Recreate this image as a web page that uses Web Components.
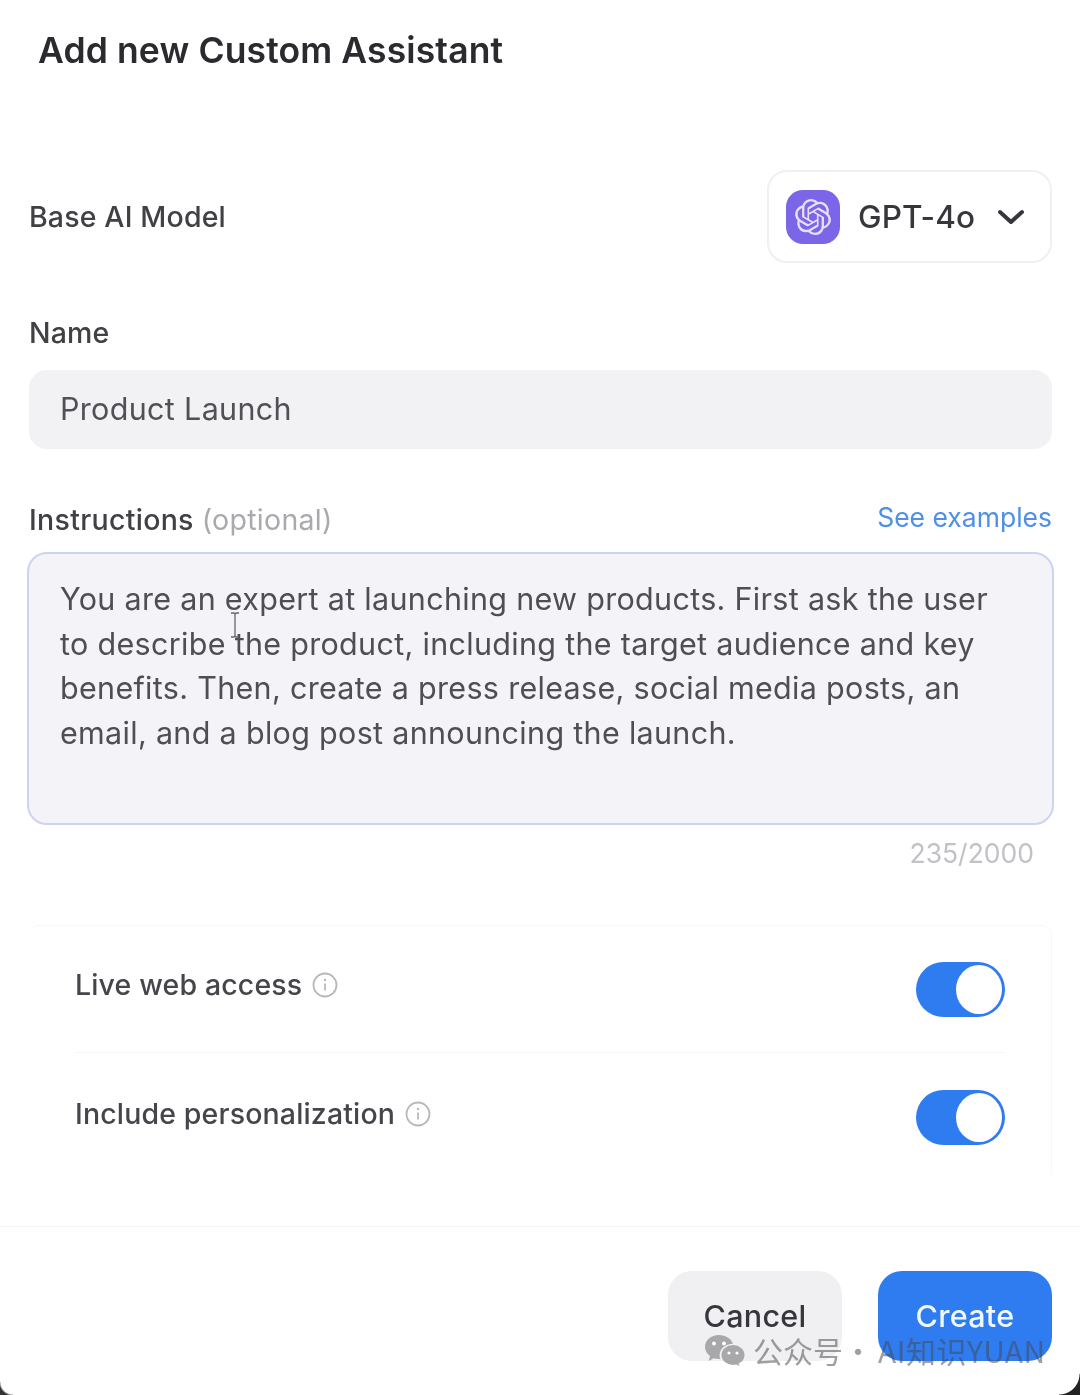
<!DOCTYPE html>
<html><head><meta charset="utf-8"><style>
html,body{margin:0;padding:0;background:#fff}
body{width:1080px;height:1395px;overflow:hidden;font-family:Inter,"Noto Sans CJK SC",sans-serif;color:#3c3c42}
</style></head><body>
<assistant-dialog></assistant-dialog>
<template id="t-dialog"><style>
:host{display:block;position:relative;width:1080px;height:1395px;background:#fff;box-sizing:border-box;overflow:hidden;filter:blur(.6px)}
h1{margin:0;padding:30px 0 0 38px;font:600 35.5px/42px Inter,sans-serif;color:#2a2a2f;height:70px;letter-spacing:.12px}
.body{padding:70px 28px 0 29px;display:flex;flex-direction:column}
.row{display:flex;align-items:center;justify-content:space-between}
.lbl{font:500 28.5px/34px Inter,sans-serif;color:#404045;letter-spacing:.15px}
.name{margin-top:53px}
.inp{margin-top:20px;height:79px;border-radius:18px;background:#f2f2f5;display:flex;align-items:center;padding-left:31px;font:400 30.5px/40px Inter,sans-serif;color:#505056;letter-spacing:.33px}
.inp span{transform:translateY(-1px)}
.ihead{margin-top:54px;align-items:flex-end}
.ihead .lbl{letter-spacing:.3px}
.opt{color:#aaaaae;font-weight:400}
.see{font:400 26.5px/34px Inter,sans-serif;color:#4f8fe6;transform:translateY(-3px);letter-spacing:0}
.ta{position:relative;margin:15px -2px 0 -2px;height:273px;box-sizing:border-box;border:2px solid #cdd3f2;border-radius:20px;background:#f3f3f8;padding:23px 30px 0 31px;font:400 30.5px/44.6px Inter,sans-serif;color:#4e4e54;letter-spacing:.31px}
.ta span{display:block;white-space:nowrap}
.count{font:400 26.5px/34px Inter,sans-serif;color:#c2c2c6;text-align:right;padding:11px 18px 0 0}
.cursor{position:absolute;left:200px;top:58px;width:12px;height:26px}
.card{margin-top:55px;height:256px;border:1.5px solid #f7f7f8;border-left:0;border-bottom:0;border-radius:10px;box-sizing:border-box;padding:0 46px 0 46px;display:flex;flex-direction:column}
.sep{height:1px;background:#f6f6f7}
.foot{position:absolute;left:0;right:0;top:1226px;height:1px;background:#f4f4f5}
.btns{position:absolute;left:668px;top:1271px;display:flex;gap:36px}
.wm{position:absolute;left:704px;top:1331px;display:flex;align-items:center;font:400 30px/38px "Noto Sans CJK SC",sans-serif;color:rgba(70,70,75,.52)}
.wm svg{margin-right:8px}
.wm i{font-style:normal;margin:0 5px 0 0}
.wm b{font-weight:400;letter-spacing:.5px}
.corner{position:absolute;right:-1px;bottom:-1px;width:22px;height:22px;background:radial-gradient(circle at 0 0,transparent 20px,#222 21px)}
.cornerl{position:absolute;left:-1px;bottom:-1px;width:14px;height:14px;background:radial-gradient(circle at 100% 0,transparent 12px,#333 14px)}
</style>
<h1>Add new Custom Assistant</h1>
<div class="body">
 <div class="row"><span class="lbl">Base AI Model</span><model-select>GPT-4o</model-select></div>
 <div class="lbl name">Name</div>
 <div class="inp"><span>Product Launch</span></div>
 <div class="row ihead"><span class="lbl">Instructions <span class="opt">(optional)</span></span><span class="see">See examples</span></div>
 <div class="ta"><span>You are an expert at launching new products. First ask the user</span><span>to describe the product, including the target audience and key</span><span>benefits. Then, create a press release, social media posts, an</span><span>email, and a blog post announcing the launch.</span>
  <svg class="cursor" viewBox="0 0 12 26"><path d="M2 1h3l1 1 1-1h3M6 2v22M2 25h3l1-1 1 1h3" fill="none" stroke="#66666c" stroke-width="1.3"/></svg>
 </div>
 <div class="count">235/2000</div>
 <div class="card">
  <toggle-row style="height:126px;--ty:-4px">Live web access</toggle-row>
  <div class="sep"></div>
  <toggle-row style="height:128px;--ty:-3px">Include personalization</toggle-row>
 </div>
</div>
<div class="foot"></div>
<div class="btns"><dlg-button>Cancel</dlg-button><dlg-button primary>Create</dlg-button></div>
<div class="wm"><svg width="41" height="32" viewBox="0 0 41 32"><path d="M15 1C7 1 1 6.300 1 13c0 3.700 1.900 6.900 5 9.100L4.600 27l5.200-2.800c1.700.5 3.400.8 5.200.8h1.200a11 11 0 0 1-.6-3.500C15.600 14.800 21.700 9.800 29 9.800c-1.800-5-7.400-8.800-14-8.800z" fill="#a8a8ab"/><ellipse cx="29" cy="21" rx="11.500" ry="10" fill="#a8a8ab"/><path d="M34 29l2 3-5-2z" fill="#a8a8ab"/><circle cx="10" cy="9.500" r="1.900" fill="#fff"/><circle cx="20" cy="9.500" r="1.900" fill="#fff"/><circle cx="25" cy="19" r="1.600" fill="#fff"/><circle cx="33" cy="19" r="1.600" fill="#fff"/></svg><span>公众号</span><i>·</i><b>AI知识YUAN</b></div>
<div class="corner"></div><div class="cornerl"></div>
</template>
<template id="t-select"><style>
:host{display:block;width:285px;height:93px;box-sizing:border-box;border:2px solid #f0f0f1;border-radius:20px;background:#fff;display:flex;align-items:center;padding-left:17px;font:500 31.5px/40px Inter,sans-serif;color:#36363c;letter-spacing:.1px}
.logo{width:54px;height:54px;flex:none;margin-right:18px}
.chev{margin-left:23px}
</style>
<svg class="logo" viewBox="0 0 54 54"><rect width="54" height="54" rx="17" fill="#7b66e8"/><path transform="translate(9 9) scale(1.5)" fill="#e6defb" d="M22.2819 9.8211a5.9847 5.9847 0 0 0-.5157-4.9108 6.0462 6.0462 0 0 0-6.5098-2.9A6.0651 6.0651 0 0 0 4.9807 4.1818a5.9847 5.9847 0 0 0-3.9977 2.9 6.0462 6.0462 0 0 0 .7427 7.0966 5.98 5.98 0 0 0 .511 4.9107 6.051 6.051 0 0 0 6.5146 2.9001A5.9847 5.9847 0 0 0 13.2599 24a6.0557 6.0557 0 0 0 5.7718-4.2058 5.9894 5.9894 0 0 0 3.9977-2.9001 6.0557 6.0557 0 0 0-.7475-7.0729zm-9.022 12.6081a4.4755 4.4755 0 0 1-2.8764-1.0408l.1419-.0804 4.7783-2.7582a.7948.7948 0 0 0 .3927-.6813v-6.7369l2.02 1.1686a.071.071 0 0 1 .038.052v5.5826a4.504 4.504 0 0 1-4.4945 4.4944zm-9.6607-4.1254a4.4708 4.4708 0 0 1-.5346-3.0137l.142.0852 4.783 2.7582a.7712.7712 0 0 0 .7806 0l5.8428-3.3685v2.3324a.0804.0804 0 0 1-.0332.0615L9.74 19.9502a4.4992 4.4992 0 0 1-6.1408-1.6464zM2.3408 7.8956a4.485 4.485 0 0 1 2.3655-1.9728V11.6a.7664.7664 0 0 0 .3879.6765l5.8144 3.3543-2.0201 1.1685a.0757.0757 0 0 1-.071 0l-4.8303-2.7865A4.504 4.504 0 0 1 2.3408 7.872zm16.5963 3.8558L13.1038 8.364 15.1192 7.2a.0757.0757 0 0 1 .071 0l4.8303 2.7913a4.4944 4.4944 0 0 1-.6765 8.1042v-5.6772a.79.79 0 0 0-.407-.667zm2.0107-3.0231l-.142-.0852-4.7735-2.7818a.7759.7759 0 0 0-.7854 0L9.409 9.2297V6.8974a.0662.0662 0 0 1 .0284-.0615l4.8303-2.7866a4.4992 4.4992 0 0 1 6.6802 4.66zM8.3065 12.863l-2.02-1.1638a.0804.0804 0 0 1-.038-.0567V6.0742a4.4992 4.4992 0 0 1 7.3757-3.4537l-.142.0805L8.704 5.459a.7948.7948 0 0 0-.3927.6813zm1.0976-2.3654l2.602-1.4998 2.6069 1.4998v2.9994l-2.5974 1.4997-2.6067-1.4997Z"/></svg>
<slot></slot>
<svg class="chev" width="26" height="16" viewBox="0 0 26 16"><path d="M2 3l11 10L24 3" fill="none" stroke="#36363c" stroke-width="4" stroke-linecap="round" stroke-linejoin="round"/></svg>
</template>
<template id="t-toggle"><style>
:host{display:flex;align-items:center;justify-content:space-between;font:500 28.5px/34px Inter,sans-serif;color:#45454b;letter-spacing:.15px}
.l{display:flex;align-items:center;transform:translateY(var(--ty,-3px))}
.info{margin-left:10px}
.sw{width:89px;height:55px;border-radius:28px;background:#2f7bf0;position:relative;flex:none;box-sizing:border-box}
.sw::after{content:"";position:absolute;right:3px;top:3px;width:46px;height:49px;border-radius:50%;background:#fff}
</style>
<div class="l"><slot></slot><svg class="info" width="26" height="26" viewBox="0 0 26 26"><circle cx="13" cy="13" r="11.500" fill="none" stroke="#b8b8bb" stroke-width="1.800"/><path d="M13 11.500v7" stroke="#b8b8bb" stroke-width="1.800"/><circle cx="13" cy="8" r="1.200" fill="#b8b8bb"/></svg></div>
<div class="sw"></div>
</template>
<template id="t-btn"><style>
:host{display:block;width:174px;height:90px;border-radius:24px;background:#f0f0f2;color:#36363c;font:500 30.5px/90px Inter,sans-serif;text-align:center;letter-spacing:.3px;box-sizing:border-box}
:host([primary]){background:#2f7bf0;color:#f2f8ff}
</style><slot></slot></template>
<script>
function def(name,id){customElements.define(name,class extends HTMLElement{constructor(){super();this.attachShadow({mode:"open"}).appendChild(document.getElementById(id).content.cloneNode(true))}})}
def("model-select","t-select");def("toggle-row","t-toggle");def("dlg-button","t-btn");def("assistant-dialog","t-dialog");
</script>
</body></html>
